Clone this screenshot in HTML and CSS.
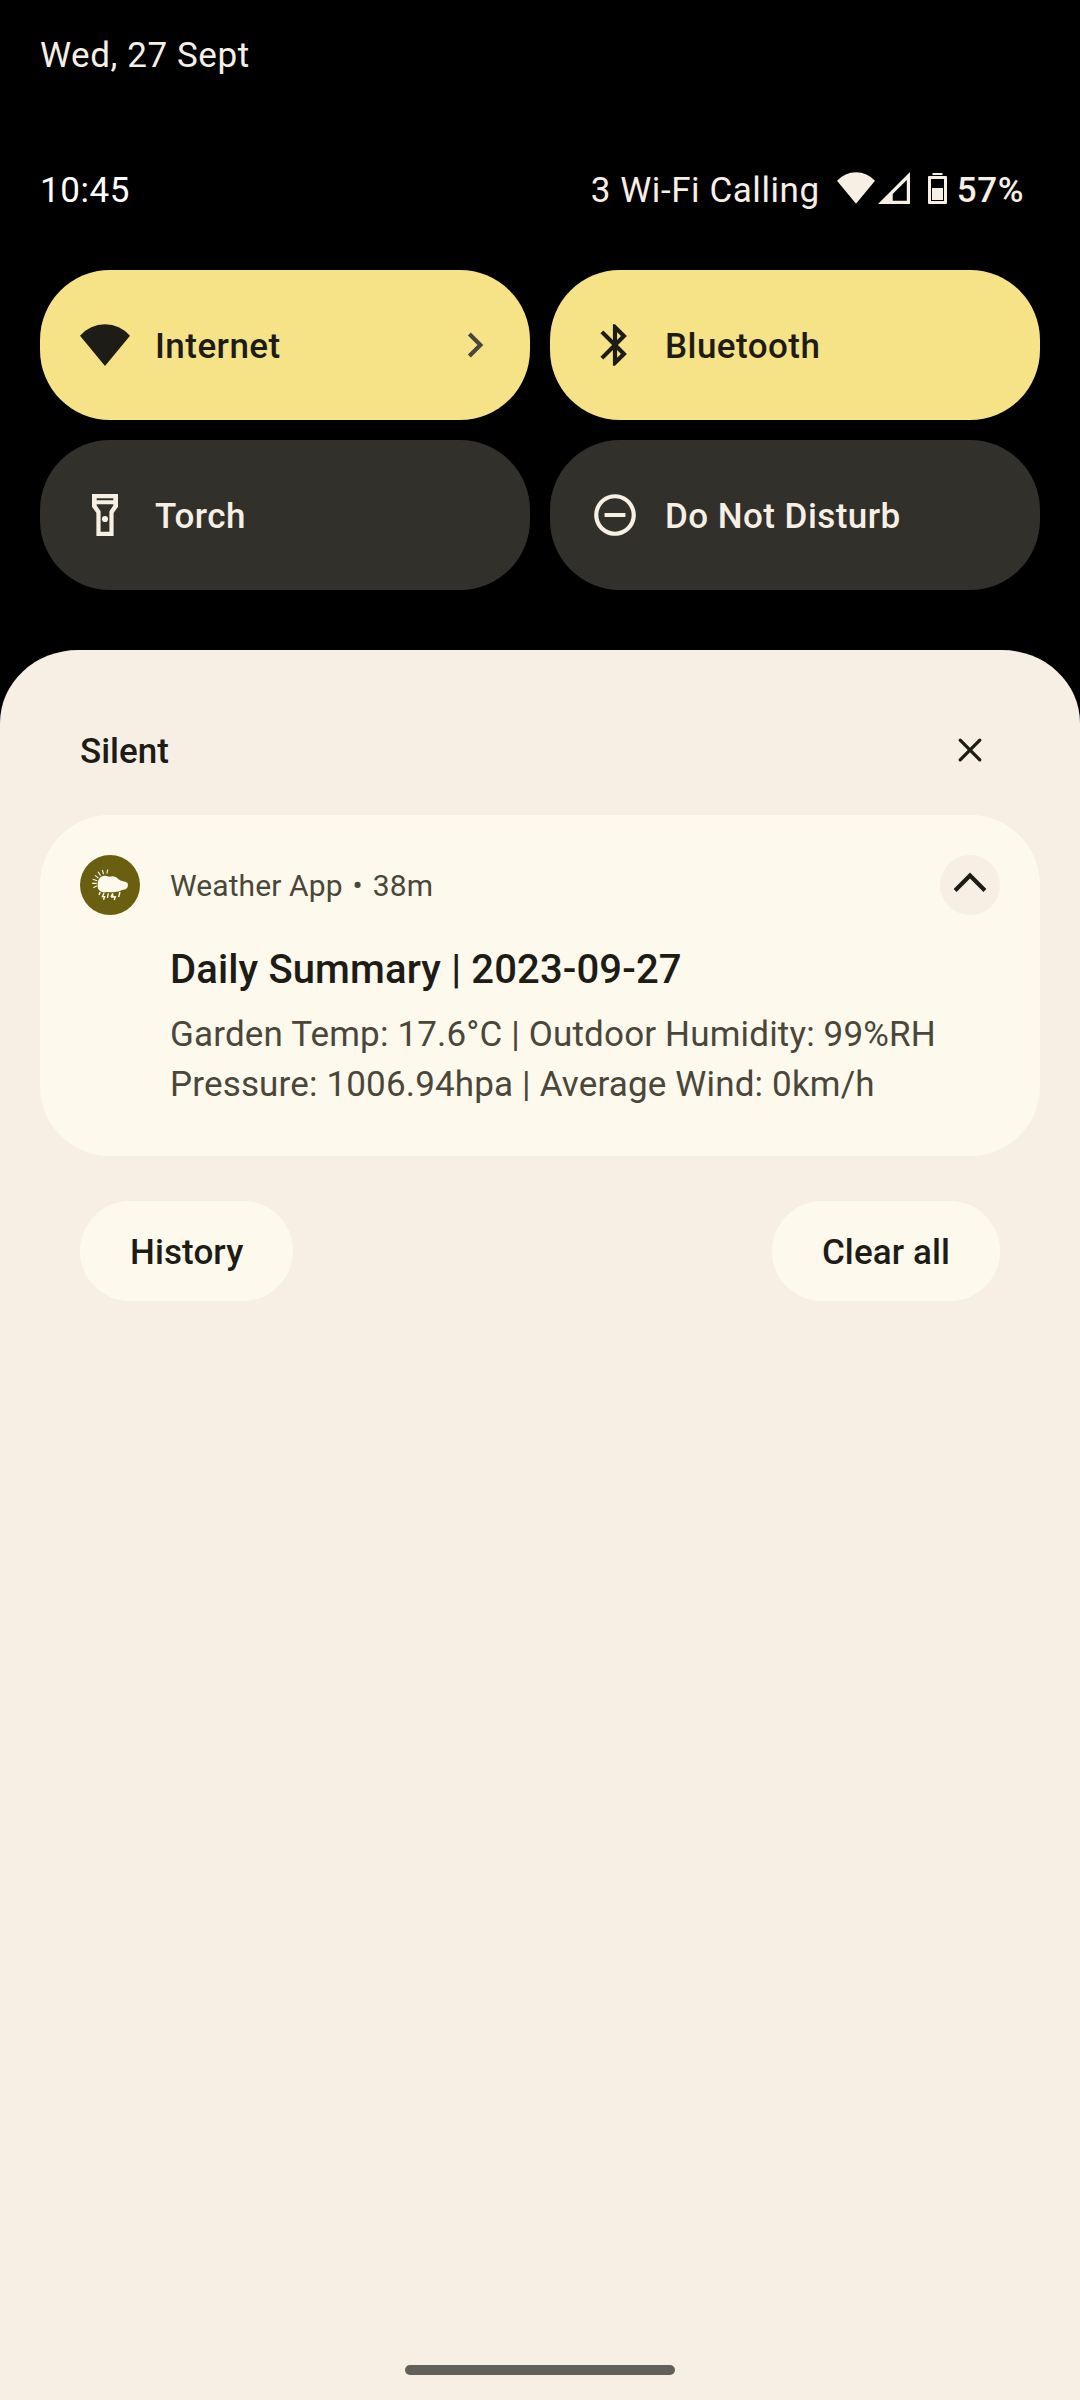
FILE: index.html
```
<!DOCTYPE html>
<html lang="en-GB">
<head>
<meta charset="utf-8">
<title>Notifications</title>
<link rel="stylesheet" href="styles.css">
</head>
<body>
<div class="shade">
  <header class="header">
    <div class="date">Wed, 27 Sept</div>
    <div class="status">
      <span class="clock">10:45</span>
      <div class="status-icons">
        <span class="carrier">3 Wi-Fi Calling</span>
        <svg class="st-wifi" viewBox="0 0 38 32"><path d="M0 8.7A25.5 25.5 0 0 1 38 8.7L19 31.7z"/></svg>
        <svg class="st-signal" viewBox="0 0 32 32"><path fill-rule="evenodd" d="M0 32L32 0V32zM14.7 28.8V22L28.8 8V28.8z"/></svg>
        <svg class="st-battery" viewBox="0 0 19 31"><path d="M4.5 0h10v2h-10z"/><path fill-rule="evenodd" d="M1 3H18Q19 3 19 4V30Q19 31 18 31H1Q0 31 0 30V4Q0 3 1 3zM3 6V28H16V6z"/><path d="M4 15h11v12h-11z"/></svg>
        <span class="percent">57%</span>
      </div>
    </div>
    <div class="tiles">
      <div class="tile tile-on">
        <svg class="tile-icon" viewBox="0 0 50 50"><path d="M0 15.8A33 33 0 0 1 50 15.8L25 46z"/></svg>
        <span class="tile-label">Internet</span>
        <svg class="tile-chevron" viewBox="0 0 24 24"><path d="M10 6L8.59 7.41 13.17 12l-4.58 4.59L10 18l6-6z"/></svg>
      </div>
      <div class="tile tile-on">
        <svg class="tile-icon" viewBox="0 0 24 24"><path d="M17.71 7.71L12 2h-1v7.59L6.41 5 5 6.41 10.59 12 5 17.59 6.41 19 11 14.41V22h1l5.71-5.71-4.3-4.29 4.3-4.29zM13 5.83l1.88 1.88L13 9.59V5.83zm1.88 10.46L13 18.17v-3.76l1.88 1.88z"/></svg>
        <span class="tile-label">Bluetooth</span>
      </div>
      <div class="tile">
        <svg class="tile-icon" viewBox="0 0 50 50"><g transform="translate(12 4)"><path fill-rule="evenodd" d="M0 0H26V12.7L21.6 19V42H4.4V19L0 12.7zM4.7 4.2V6.3H21.3V4.2zM4.7 10.2V11.5L8.6 17.3V37.8H17.4V17.3L21.3 11.5V10.2z"/><circle cx="13" cy="25" r="3.1"/></g></svg>
        <span class="tile-label">Torch</span>
      </div>
      <div class="tile">
        <svg class="tile-icon" viewBox="0 0 24 24"><path d="M12 2C6.48 2 2 6.48 2 12s4.48 10 10 10 10-4.48 10-10S17.52 2 12 2zm0 18c-4.41 0-8-3.59-8-8s3.59-8 8-8 8 3.59 8 8-3.59 8-8 8zM7 11h10v2H7z"/></svg>
        <span class="tile-label">Do Not Disturb</span>
      </div>
    </div>
  </header>
  <main class="sheet">
    <div class="section-head">
      <span class="section-title">Silent</span>
      <svg class="close" viewBox="0 0 60 60"><path d="M20.2 20.2L39.8 39.8M39.8 20.2L20.2 39.8"/></svg>
    </div>
    <article class="card">
      <div class="card-head">
        <svg class="app-icon" viewBox="0 0 60 60">
          <circle class="app-disc" cx="30" cy="30" r="30"/>
          <path class="cloud" d="M17.7 29C17.7 24 21 20.5 25.5 20.8C27 21 28 21.8 29 21.8C31 21.2 33.5 21 35.5 22C37.5 22.8 38.5 24.7 40 25.2C42.5 26.3 46 26.2 47.5 28C48.5 30 48 33 45.5 34.3C44 35 42 34.5 40 36C38 37.2 35 36.5 33 37.2C30 37.5 28 36.3 25.5 37.3C23 37.6 21.8 37 20.5 36.2C18.5 35.5 17.2 33 17.7 29z"/>
          <path class="strokes" d="M27.7 14.5L26.9 18.7M22.3 15L23.6 19.2M18 16.8L20.6 20.6M15 20.4L18.4 23.2M12.7 24.2L17.2 25.8M12.2 28.4H16.8M13.4 32.7L17 30.8"/>
          <path class="strokes bolts" d="M20.2 37L19 40M24 38L22.5 41.6H24.6L23.5 44.8M28.3 38.3L27.4 42.8M32.8 38.3L30.9 41.8M33.2 39.5L32 42L35.3 41.7L34.3 45M40 37L38.6 42"/>
        </svg>
        <div class="card-meta"><span>Weather App</span><span class="dot">•</span><span>38m</span></div>
        <svg class="collapse" viewBox="0 0 60 60"><circle cx="30" cy="30" r="30"/><path d="M15.1 35.4L30 20.5L44.9 35.4"/></svg>
      </div>
      <div class="card-body">
        <h1 class="card-title">Daily Summary | 2023-09-27</h1>
        <p class="card-text">Garden Temp: 17.6°C | Outdoor Humidity: 99%RH<br>Pressure: 1006.94hpa | Average Wind: 0km/h</p>
      </div>
    </article>
    <div class="actions">
      <button class="pill">History</button>
      <button class="pill">Clear all</button>
    </div>
    <div class="nav-handle"></div>
  </main>
</div>
</body>
</html>
```
FILE: styles.css
```
* { box-sizing: border-box; }
body { margin: 0; background: #000; font-family: Roboto, sans-serif; font-size: 35px; color: #1d1c17; }
svg { display: block; flex: none; fill: currentColor; }

.shade { width: 1080px; height: 2400px; display: flex; flex-direction: column; }

.header { padding: 0 40px 60px; color: #f7efe4; letter-spacing: 0.57px; }
.date { height: 110px; line-height: 112px; }
.status { height: 160px; padding-right: 16px; display: flex; justify-content: space-between; line-height: 162px; }
.clock { color: #fff; }
.status-icons { display: flex; }
.st-wifi { width: 38px; height: 32px; margin: 62px 3px 0 17px; }
.st-signal { width: 32px; height: 32px; margin: 62px 18px 0 0; }
.st-battery { width: 19px; height: 31px; margin: 63px 10px 0 0; }
.percent { font-weight: 500; }

.tiles { display: grid; grid-template-columns: 1fr 1fr; gap: 20px; }
.tile { height: 150px; border-radius: 70px; padding: 0 30px 0 40px; display: flex; align-items: center; gap: 25px; background: #31302b; font-weight: 500; letter-spacing: 0.45px; }
.tile-on { background: #f6e287; color: #1d1c17; }
.tile-icon { width: 50px; height: 50px; }
.tile-label { flex: 1; line-height: 42px; padding-top: 4px; }
.tile-chevron { width: 50px; height: 50px; color: #4a473a; }

.sheet { flex: 1; padding: 35px 40px 25px; background: #f7efe4; border-radius: 78px 78px 0 0 / 73px 73px 0 0; display: flex; flex-direction: column; }
.section-head { height: 130px; padding: 0 40px; display: flex; align-items: center; justify-content: space-between; }
.section-title { font-weight: 500; line-height: 42px; padding-top: 4px; }
.close { width: 60px; height: 60px; stroke: currentColor; stroke-width: 3.3; stroke-linecap: round; }

.card { background: #fef9ed; border-radius: 70px; padding: 40px 40px 46px; }
.card-head { display: flex; gap: 30px; height: 60px; }
.app-icon, .collapse { width: 60px; height: 60px; }
.app-disc { fill: #6a5f11; }
.cloud { fill: #fef9ed; }
.strokes { fill: none; stroke: #fef9ed; stroke-width: 1.1; }
.bolts { stroke-width: 1.4; }
.card-meta { flex: 1; display: flex; font-size: 30px; line-height: 62px; color: #4a473a; letter-spacing: 0.1px; }
.dot { margin: 0 10px; }
.collapse circle { fill: #f7efe4; }
.collapse path { fill: none; stroke: #1d1c17; stroke-width: 4.2; }
.card-body { padding: 25px 0 0 90px; }
.card-title { margin: 0; font-size: 40px; font-weight: 500; line-height: 60px; letter-spacing: 0.13px; }
.card-text { margin: 10px 0 0; line-height: 50px; color: #4a473a; letter-spacing: 0.16px; }

.actions { display: flex; justify-content: space-between; padding: 45px 40px 0; }
.pill { height: 100px; padding: 2px 50px 0; border: 0; border-radius: 50px; background: #fef9ed; color: inherit; font: 500 35px Roboto, sans-serif; letter-spacing: 0.1px; }

.nav-handle { width: 270px; height: 10px; margin: auto auto 0; border-radius: 5px; background: #62605b; }
```
